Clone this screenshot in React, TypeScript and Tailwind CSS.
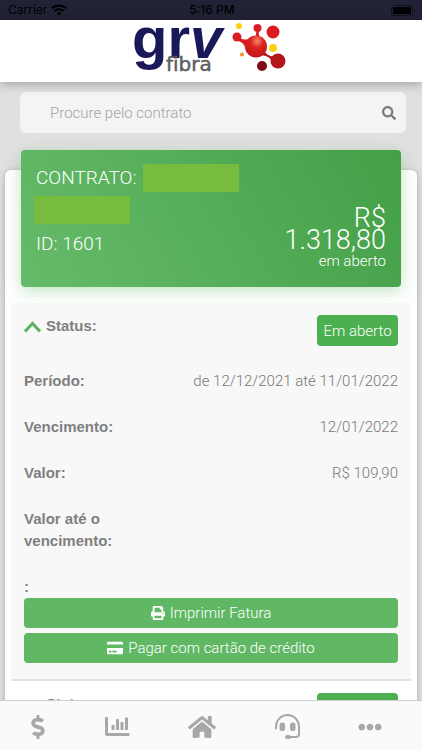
import type { ReactNode } from 'react';
import { FaCreditCard, FaDollarSign, FaEllipsisH, FaHome, FaPrint, FaSearch } from 'react-icons/fa';

interface InvoiceRow {
  label: string;
  value?: string;
}

const rows: InvoiceRow[] = [
  { label: 'Período:', value: 'de 12/12/2021 até 11/01/2022' },
  { label: 'Vencimento:', value: '12/01/2022' },
  { label: 'Valor:', value: 'R$ 109,90' },
  { label: 'Valor até o vencimento:' },
];

export default function App() {
  return (
    <div className="flex h-screen flex-col overflow-hidden bg-[#e0e0e0] font-['Roboto','Liberation_Sans',sans-serif] text-[15px] font-light leading-[22px] text-[#777777]">
      <StatusBar />
      <header className="z-10 flex h-[62px] shrink-0 justify-center bg-white shadow-[0_2px_10px_rgba(0,0,0,0.3)]">
        <Logo />
      </header>

      <main className="min-h-0 flex-1 overflow-hidden">
        <form className="mr-4 ml-5 mt-[10px] flex h-[41px] items-center rounded-md bg-[#f4f4f4] pr-[10px] pl-[30px]">
          <input
            type="search"
            aria-label="Procure pelo contrato"
            placeholder="Procure pelo contrato"
            className="min-w-0 flex-1 bg-transparent outline-none placeholder:text-[#a4a4a4]"
          />
          <button type="submit" aria-label="Buscar" className="text-[#7c7c7c]">
            <FaSearch size={14} />
          </button>
        </form>

        <section className="mx-[5px] mt-[37px] rounded-md bg-white px-[6px] pb-4 shadow-[0_1px_6px_rgba(0,0,0,0.25)]">
          <ContractCard />
          <div className="mt-4 border-b-2 border-[#e2e2e2] bg-[#f8f8f8] px-[13px] pb-4">
            <StatusRow open />
            <dl>
              {rows.map((row) => (
                <div key={row.label} className="flex justify-between py-3">
                  <dt className="w-[140px] font-['Liberation_Sans',sans-serif] font-bold text-[#808080]">{row.label}</dt>
                  <dd>{row.value}</dd>
                </div>
              ))}
            </dl>
            <div className="pt-3 font-['Liberation_Sans',sans-serif] font-bold text-[#808080]">:</div>
            <div className="space-y-[5px]">
              <ActionButton icon={<FaPrint size={14} />}>Imprimir Fatura</ActionButton>
              <ActionButton icon={<FaCreditCard size={16} />}>Pagar com cartão de crédito</ActionButton>
            </div>
          </div>
          <div className="px-[13px]">
            <StatusRow />
          </div>
        </section>
      </main>

      <TabBar />
    </div>
  );
}

function StatusBar() {
  return (
    <div className="grid h-5 shrink-0 grid-cols-3 items-center bg-[#222236] pr-[6px] pl-2 font-['Inter',sans-serif] text-xs font-normal text-black">
      <div className="flex items-center gap-1">
        Carrier
        <svg width="16" height="12" viewBox="0 0 16 12" fill="none" stroke="currentColor" strokeWidth="2">
          <path d="M1 4.4a10 10 0 0 1 14 0M3.6 7a6.2 6.2 0 0 1 8.8 0" />
          <path d="M8 11.5 5.8 9.2a3.1 3.1 0 0 1 4.4 0z" fill="currentColor" stroke="none" />
        </svg>
      </div>
      <div className="text-center font-medium">5:16 PM</div>
      <svg className="justify-self-end" width="25" height="11" viewBox="0 0 25 11">
        <rect x="0.5" y="0.5" width="21" height="10" rx="2.5" fill="none" stroke="#000" strokeOpacity="0.5" />
        <rect x="2" y="2" width="18" height="7" rx="1" />
        <path d="M23 4v3.5q1.5-.5 1.5-1.75T23 4" fillOpacity="0.5" />
      </svg>
    </div>
  );
}

function Logo() {
  return (
    <svg width="156" height="54" viewBox="0 0 156 54" role="img" aria-label="grv fibra">
      <defs>
        <radialGradient id="core" cx="0.55" cy="0.25" r="0.75">
          <stop offset="0" stopColor="#f58b6c" />
          <stop offset="0.4" stopColor="#dc2420" />
          <stop offset="1" stopColor="#c4121a" />
        </radialGradient>
      </defs>
      <text x="-1" y="38" fontSize="58" fontWeight="700" fill="#191858" className="font-['Liberation_Sans',sans-serif]">
        gr<tspan fontStyle="italic">v</tspan>
      </text>
      <text
        x="33"
        y="51"
        fontSize="20"
        fill="#5e5e62"
        stroke="#5e5e62"
        strokeWidth="0.5"
        className="font-['DejaVu_Sans',sans-serif] font-normal [font-variant-ligatures:none]"
      >
        fibra
      </text>
      <g fill="#dc1c24">
        <path d="M103 15q6 6 12 4l-3 8q-2-6-11-7zM123 10h3q-1 7 3 10h-9q4-3 3-10z" />
        <path d="M131 31q5 7 12 5l-4 8q0-8-11-9z" fill="#b5161c" />
        <circle cx="104" cy="17" r="4.5" />
        <circle cx="124.5" cy="8" r="4" />
        <circle cx="140" cy="12" r="6.5" />
        <circle cx="145" cy="41" r="7.5" fill="#b5161c" />
        <circle cx="129" cy="46" r="5" fill="#7d0a12" />
        <circle cx="123" cy="26.5" r="11" fill="url(#core)" />
      </g>
      <g fill="#fbd10b">
        <circle cx="106" cy="6" r="3" />
        <circle cx="140" cy="28" r="4" />
        <circle cx="109" cy="34.5" r="2" fill="#ee9322" />
      </g>
    </svg>
  );
}

function ContractCard() {
  return (
    <div className="relative -top-5 mx-[10px] -mb-5 flex h-[137px] justify-between rounded bg-[linear-gradient(60deg,#66bb6a,#43a047)] px-[15px] text-white shadow-[0_4px_16px_rgba(76,175,80,0.35)]">
      <div className="space-y-1 pt-[14px] text-[19px] leading-7">
        <div className="flex items-center gap-[7px]">
          CONTRATO:
          <span className="h-7 w-24 bg-[#77bc3f]" />
        </div>
        <div className="-ml-[2px] h-7 w-24 bg-[#77bc3f]" />
        <div className="pt-[2px]">ID: 1601</div>
      </div>
      <div className="flex flex-col justify-end pb-4 text-right">
        <div className="text-[27px] leading-[22px]">
          R$
          <br />
          1.318,80
        </div>
        <div className="leading-5">em aberto</div>
      </div>
    </div>
  );
}

function StatusRow({ open = false }: { open?: boolean }) {
  return (
    <div className="flex justify-between py-3">
      <div className="flex items-start gap-[5px] font-['Liberation_Sans',sans-serif] font-bold text-[#808080]">
        <svg className="mt-[5px]" width="17" height="13" viewBox="0 0 17 13" fill="none" stroke="#5cb460" strokeWidth="3">
          <path d={open ? 'M1 11.5 8.5 3.5l7.5 8' : 'M1 3.5l7.5 8 7.5-8'} />
        </svg>
        Status:
      </div>
      <span className="flex h-[31px] w-[81px] items-center justify-center rounded bg-[#4caf50] text-white">
        Em aberto
      </span>
    </div>
  );
}

function ActionButton({ icon, children }: { icon: ReactNode; children: ReactNode }) {
  return (
    <button
      type="button"
      className="flex h-[30px] w-full items-center justify-center gap-[5px] rounded bg-[#61b864] text-white"
    >
      {icon}
      {children}
    </button>
  );
}

function TabBar() {
  const tabs = [
    { label: 'Financeiro', icon: <FaDollarSign className="h-6 w-4" /> },
    { label: 'Consumo', icon: <ChartIcon /> },
    { label: 'Início', icon: <FaHome size={28} /> },
    { label: 'Suporte', icon: <HeadsetIcon /> },
    { label: 'Mais', icon: <FaEllipsisH size={24} /> },
  ];

  return (
    <nav className="z-10 flex h-[50px] shrink-0 justify-between border-t border-[#cfcfcf] bg-[#fafafa] pr-10 pl-[30px] text-[#a8a8a8]">
      {tabs.map((tab) => (
        <button key={tab.label} type="button" aria-label={tab.label} className="flex items-center pt-[2px]">
          {tab.icon}
        </button>
      ))}
    </nav>
  );
}

function ChartIcon() {
  return (
    <svg width="25" height="19" viewBox="0 0 25 19" fill="currentColor">
      <path d="M1 0h1q1 0 1 1v15h20.5q1 0 1 1v1q0 1-1 1H2q-2 0-2-2V1q0-1 1-1z" />
      <rect x="6.5" y="8" width="3" height="5" rx="0.5" />
      <rect x="11" y="2" width="3" height="11" rx="0.5" />
      <rect x="15.5" y="5" width="3" height="8" rx="0.5" />
      <rect x="20" y="0.5" width="3" height="12.5" rx="0.5" />
    </svg>
  );
}

function HeadsetIcon() {
  return (
    <svg width="25" height="25" viewBox="0 0 25 25" fill="none" stroke="currentColor" strokeWidth="2">
      <path d="M1 14.5V12.5a11.5 11.5 0 0 1 23 0V20q0 3-3 3h-6" strokeLinecap="round" />
      <g fill="currentColor" stroke="none">
        <rect x="4.5" y="8.5" width="5.5" height="8.5" rx="2.5" />
        <rect x="15" y="8.5" width="5.5" height="8.5" rx="2.5" />
        <rect x="10" y="21" width="6" height="4" rx="2" />
      </g>
    </svg>
  );
}
